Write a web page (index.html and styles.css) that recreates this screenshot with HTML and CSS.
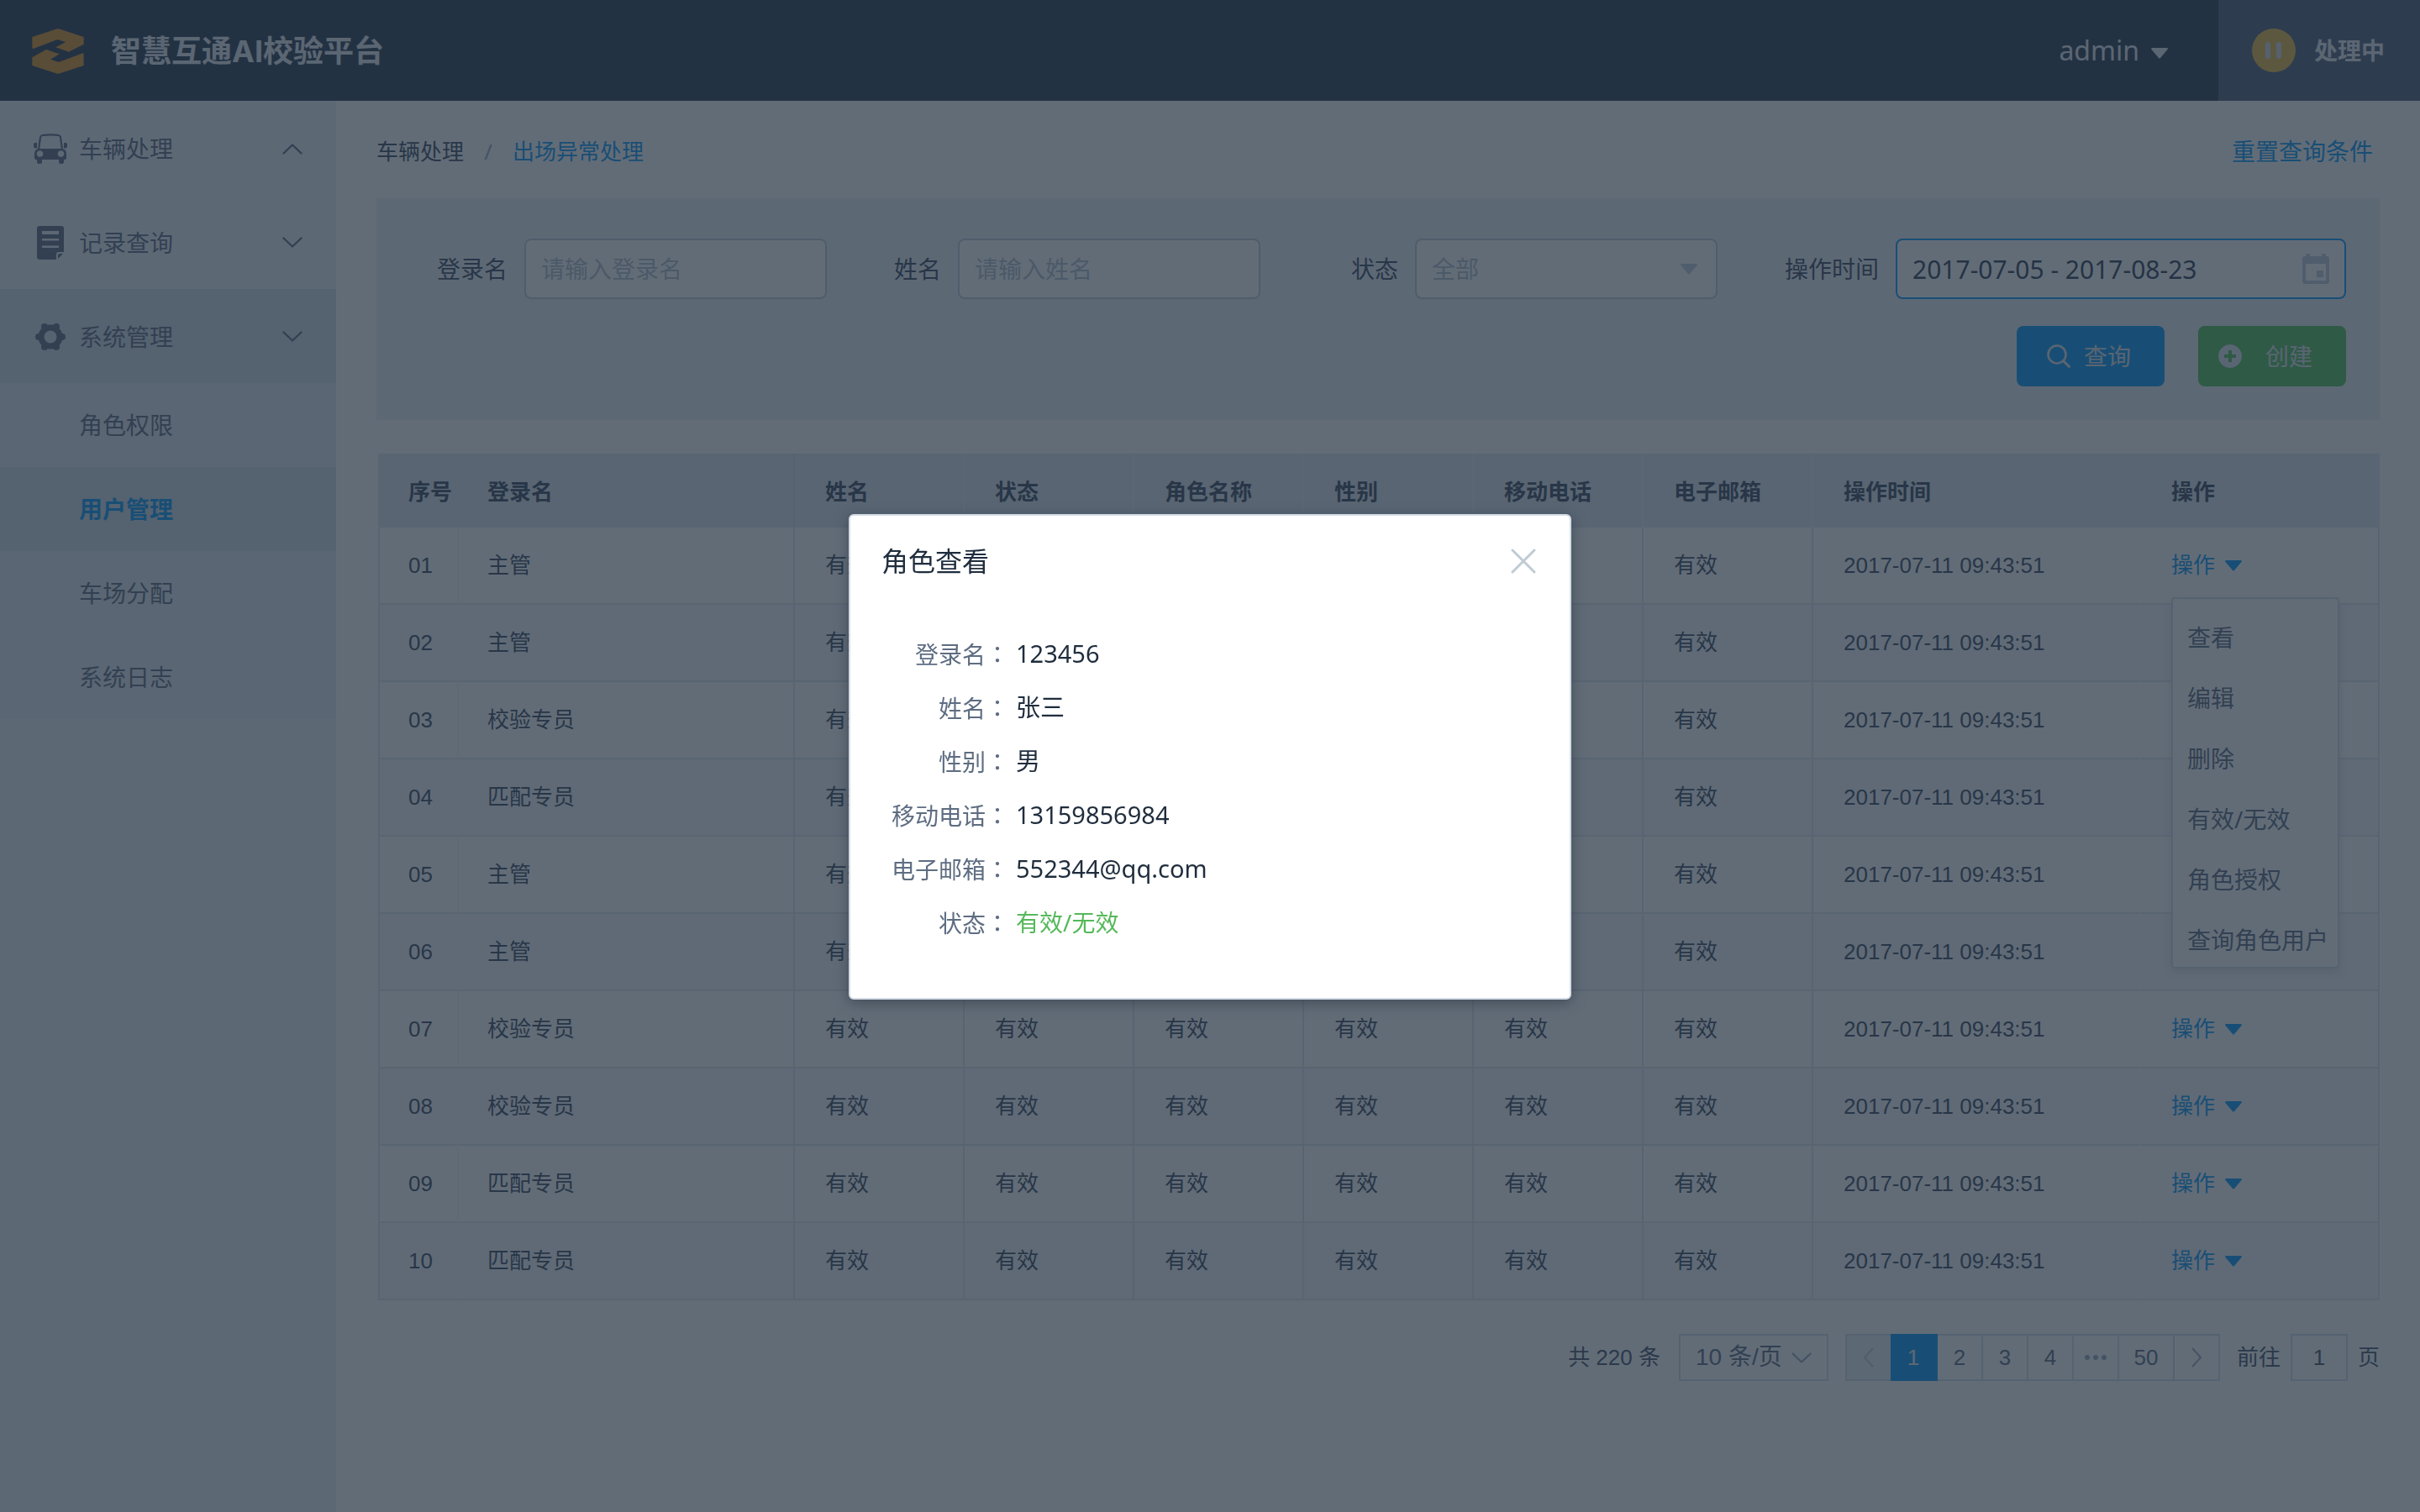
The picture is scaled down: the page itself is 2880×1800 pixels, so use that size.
FILE: index.html
```html
<!DOCTYPE html>
<html lang="zh-CN">
<head>
<meta charset="utf-8">
<meta name="viewport" content="width=device-width, initial-scale=1">
<title>智慧互通AI校验平台</title>
<link rel="stylesheet" href="styles.css">
</head>
<body>
<svg class="sprite" aria-hidden="true">
  <symbol id="caret" viewBox="0 0 20 13"><path d="M1 0h18q1.500 .6 .5 2L11 12q-1 1-2 0L.5 2Q-.5.6 1 0z" fill="currentColor"/></symbol>
  <symbol id="chevron" viewBox="0 0 24 14"><path d="M1.500 1.500 12 11.500 22.500 1.500" fill="none" stroke="currentColor" stroke-width="2.400" stroke-linecap="round" stroke-linejoin="round"/></symbol>
</svg>

<header class="topbar">
  <a class="brand" href="#">
    <svg class="brand-logo" viewBox="115 102 184 162" aria-hidden="true">
      <path d="M115 132 207 102l92 30v26l-54 27-46-16 36-19-30-9-86 33q-4 0-4-5zM299 234l-92 30-92-30v-29l50-28 47 16-32 19 30 10 86-32q3 1 3 5z" fill="#e2972a"/>
    </svg>
    <span class="brand-name">智慧互通AI校验平台</span>
  </a>
  <button class="account" type="button">admin<svg class="caret"><use href="#caret"/></svg></button>
  <button class="status" type="button">
    <svg class="status-icon" viewBox="0 0 52 52" aria-hidden="true"><circle cx="26" cy="26" r="26" fill="#e9bb49"/><path d="M19 19v14M32 19v14" stroke="#d5dae3" stroke-width="6" stroke-linecap="round"/></svg>
    处理中
  </button>
</header>

<div class="layout">
  <nav class="sidebar">
    <a class="nav-item" href="#">
      <svg class="nav-icon" viewBox="0 0 40 36" aria-hidden="true"><path d="M6 19 8 4.500q.4-2 2.500-2.500 9.500-1.400 19 0 2.100.5 2.500 2.500L34 19" fill="none" stroke="currentColor" stroke-width="2.200"/><path fill="currentColor" d="M0 12.500Q0 11 1.500 11H4v6.500H2.500Q0 17.500 0 15zM40 12.500Q40 11 38.500 11H36v6.500h1.500q2.500 0 2.500-2.500zM4 30h6v4q0 2-2 2H6q-2 0-2-2zM30 30h6v4q0 2-2 2h-2q-2 0-2-2z"/><path fill="currentColor" fill-rule="evenodd" d="M6 18h28q5 1 5 6v5q0 2-2 2H3q-2 0-2-2v-5q0-5 5-6zm1.500 2.200a3.800 3.800 0 1 0 .01 0zm25 0a3.800 3.800 0 1 0 .01 0z"/></svg>
      <span>车辆处理</span><svg class="nav-chevron up"><use href="#chevron"/></svg>
    </a>
    <a class="nav-item" href="#">
      <svg class="nav-icon" viewBox="0 0 40 40" aria-hidden="true"><path fill="currentColor" fill-rule="evenodd" d="M7 0h26q3 0 3 3v28h-6q-3 0-3 3v6H7q-3 0-3-3V3q0-3 3-3zm3 6v4h20V6zm0 9v2.500h20V15zm0 8.500v2.500h20v-2.500z"/><path fill="currentColor" d="m29 39 6-6h-4q-2 0-2 2z"/></svg>
      <span>记录查询</span><svg class="nav-chevron"><use href="#chevron"/></svg>
    </a>
    <a class="nav-item open" href="#">
      <svg class="nav-icon" viewBox="0 0 40 40" aria-hidden="true"><circle cx="20" cy="20" r="11" fill="none" stroke="currentColor" stroke-width="7"/><g fill="currentColor"><circle cx="34" cy="20" r="4"/><circle cx="27" cy="8" r="4"/><circle cx="13" cy="8" r="4"/><circle cx="6" cy="20" r="4"/><circle cx="13" cy="32" r="4"/><circle cx="27" cy="32" r="4"/></g></svg>
      <span>系统管理</span><svg class="nav-chevron"><use href="#chevron"/></svg>
    </a>
    <div class="subnav">
      <a class="subnav-item" href="#">角色权限</a>
      <a class="subnav-item active" href="#">用户管理</a>
      <a class="subnav-item" href="#">车场分配</a>
      <a class="subnav-item" href="#">系统日志</a>
    </div>
  </nav>

  <main class="content">
    <div class="page-head">
      <div class="breadcrumb"><a class="crumb" href="#">车辆处理</a><span class="crumb-sep">/</span><a class="crumb current" href="#">出场异常处理</a></div>
      <a class="reset" href="#">重置查询条件</a>
    </div>

    <form class="filters">
      <div class="fields">
        <div class="field"><label for="login">登录名</label><input class="control" id="login" type="text" placeholder="请输入登录名"></div>
        <div class="field"><label for="name">姓名</label><input class="control" id="name" type="text" placeholder="请输入姓名"></div>
        <div class="field"><label for="state">状态</label>
          <div class="control-wrap"><select class="control" id="state"><option>全部</option></select><svg class="caret control-icon"><use href="#caret"/></svg></div>
        </div>
        <div class="field"><label for="range">操作时间</label>
          <div class="control-wrap"><input class="control range" id="range" type="text" value="2017-07-05 - 2017-08-23">
            <svg class="calendar control-icon" viewBox="0 0 32 36" aria-hidden="true"><path fill="currentColor" fill-rule="evenodd" d="M4 0h5v3h14V0h5v3h1q3 0 3 3v27q0 3-3 3H3q-3 0-3-3V6q0-3 3-3h1zM4 12v20h24V12zm13 8h8v8h-8z"/></svg></div>
        </div>
      </div>
      <div class="actions">
        <button class="btn btn-search" type="button"><svg class="btn-icon" viewBox="0 0 28 28" aria-hidden="true"><circle cx="12" cy="12" r="10.500" fill="none" stroke="currentColor" stroke-width="2.600"/><path d="m20 20 6.500 6.500" stroke="currentColor" stroke-width="3" stroke-linecap="round"/></svg>查询</button>
        <button class="btn btn-create" type="button"><svg class="btn-icon" viewBox="0 0 28 28" aria-hidden="true"><path fill="currentColor" fill-rule="evenodd" d="M14 0a14 14 0 1 0 .01 0zM12 7h4v5h5v4h-5v5h-4v-5H7v-4h5z"/></svg>创建</button>
      </div>
    </form>

    <table class="users">
      <colgroup><col class="col-no"><col class="col-login"><col class="col-std"><col class="col-std"><col class="col-std"><col class="col-std"><col class="col-std"><col class="col-std"><col class="col-time"><col></colgroup>
      <thead><tr><th>序号</th><th>登录名</th><th>姓名</th><th>状态</th><th>角色名称</th><th>性别</th><th>移动电话</th><th>电子邮箱</th><th>操作时间</th><th>操作</th></tr></thead>
      <tbody>
        <tr><td>01</td><td>主管</td><td>有效</td><td></td><td></td><td></td><td></td><td>有效</td><td>2017-07-11 09:43:51</td><td>
          <div class="dropdown"><button class="op" type="button">操作<svg class="caret"><use href="#caret"/></svg></button>
            <div class="menu"><a href="#">查看</a><a href="#">编辑</a><a href="#">删除</a><a href="#">有效/无效</a><a href="#">角色授权</a><a href="#">查询角色用户</a></div>
          </div></td></tr>
        <tr><td>02</td><td>主管</td><td>有效</td><td></td><td></td><td></td><td></td><td>有效</td><td>2017-07-11 09:43:51</td><td></td></tr>
        <tr><td>03</td><td>校验专员</td><td>有效</td><td></td><td></td><td></td><td></td><td>有效</td><td>2017-07-11 09:43:51</td><td></td></tr>
        <tr><td>04</td><td>匹配专员</td><td>有效</td><td></td><td></td><td></td><td></td><td>有效</td><td>2017-07-11 09:43:51</td><td></td></tr>
        <tr><td>05</td><td>主管</td><td>有效</td><td></td><td></td><td></td><td></td><td>有效</td><td>2017-07-11 09:43:51</td><td></td></tr>
        <tr><td>06</td><td>主管</td><td>有效</td><td></td><td></td><td></td><td></td><td>有效</td><td>2017-07-11 09:43:51</td><td></td></tr>
        <tr><td>07</td><td>校验专员</td><td>有效</td><td>有效</td><td>有效</td><td>有效</td><td>有效</td><td>有效</td><td>2017-07-11 09:43:51</td><td><button class="op" type="button">操作<svg class="caret"><use href="#caret"/></svg></button></td></tr>
        <tr><td>08</td><td>校验专员</td><td>有效</td><td>有效</td><td>有效</td><td>有效</td><td>有效</td><td>有效</td><td>2017-07-11 09:43:51</td><td><button class="op" type="button">操作<svg class="caret"><use href="#caret"/></svg></button></td></tr>
        <tr><td>09</td><td>匹配专员</td><td>有效</td><td>有效</td><td>有效</td><td>有效</td><td>有效</td><td>有效</td><td>2017-07-11 09:43:51</td><td><button class="op" type="button">操作<svg class="caret"><use href="#caret"/></svg></button></td></tr>
        <tr><td>10</td><td>匹配专员</td><td>有效</td><td>有效</td><td>有效</td><td>有效</td><td>有效</td><td>有效</td><td>2017-07-11 09:43:51</td><td><button class="op" type="button">操作<svg class="caret"><use href="#caret"/></svg></button></td></tr>
      </tbody>
    </table>

    <div class="pagination">
      <span class="total">共 220 条</span>
      <div class="control-wrap"><select class="page-size" aria-label="每页条数"><option>10 条/页</option></select><svg class="size-chevron"><use href="#chevron"/></svg></div>
      <div class="pager">
        <button class="page prev" type="button" aria-label="上一页" disabled><svg viewBox="0 0 14 24"><path d="M12 1 2 12l10 11" fill="none" stroke="currentColor" stroke-width="2"/></svg></button>
        <button class="page active" type="button">1</button>
        <button class="page" type="button">2</button>
        <button class="page" type="button">3</button>
        <button class="page" type="button">4</button>
        <button class="page more" type="button" aria-label="更多"><svg viewBox="0 0 26 6"><circle cx="3" cy="3" r="3"/><circle cx="13" cy="3" r="3"/><circle cx="23" cy="3" r="3"/></svg></button>
        <button class="page last" type="button">50</button>
        <button class="page" type="button" aria-label="下一页"><svg viewBox="0 0 14 24"><path d="m2 1 10 11L2 23" fill="none" stroke="currentColor" stroke-width="2"/></svg></button>
      </div>
      <label class="jump">前往<input type="text" value="1">页</label>
    </div>
  </main>
</div>

<div class="mask">
  <section class="dialog" role="dialog" aria-modal="true" aria-labelledby="dialog-title">
    <header class="dialog-head">
      <h2 id="dialog-title">角色查看</h2>
      <button class="close" type="button" aria-label="关闭"><svg viewBox="0 0 30 30"><path d="m2 2 26 26M28 2 2 28" stroke="currentColor" stroke-width="3" stroke-linecap="round"/></svg></button>
    </header>
    <dl class="details">
      <dt>登录名<span class="colon" lang="zh-TW">：</span></dt><dd>123456</dd>
      <dt>姓名<span class="colon" lang="zh-TW">：</span></dt><dd>张三</dd>
      <dt>性别<span class="colon" lang="zh-TW">：</span></dt><dd>男</dd>
      <dt>移动电话<span class="colon" lang="zh-TW">：</span></dt><dd>13159856984</dd>
      <dt>电子邮箱<span class="colon" lang="zh-TW">：</span></dt><dd>552344@qq.com</dd>
      <dt>状态<span class="colon" lang="zh-TW">：</span></dt><dd class="valid">有效/无效</dd>
    </dl>
  </section>
</div>
</body>
</html>
```
FILE: styles.css
```css
:root {
  --ui: "Noto Sans", "Noto Sans CJK SC", sans-serif;
  --data: "Liberation Sans", "Noto Sans CJK SC", sans-serif;
  --blue: #089bf8;
  --green: #54c35a;
  --ink: #3d4c61;
  --muted: #5e6d82;
  --line: #dfe5ee;
  --control-line: #c0ccda;
  --placeholder: #b2becd;
}

* { box-sizing: border-box; }

body {
  margin: 0;
  min-height: 100vh;
  display: flex;
  flex-direction: column;
  background: #fff;
  color: var(--ink);
  font: 28px/40px var(--ui);
}

a { color: inherit; text-decoration: none; }

button, input, select { font: inherit; color: inherit; }

button {
  padding: 0;
  border: 0;
  background: none;
}

.sprite { display: none; }
.caret { width: 20px; height: 13px; flex: none; }

/* Top bar */
.topbar {
  display: flex;
  align-items: stretch;
  height: 120px;
  background: #2d3d53;
  color: #e6eaf0;
}

.brand {
  display: flex;
  align-items: center;
  gap: 32px;
  margin-right: auto;
  padding: 2px 0 0 38px;
}

.brand-logo { width: 62px; height: 54px; }

.brand-name {
  font-family: Inter, "Noto Sans CJK SC", sans-serif;
  font-size: 36px;
  font-weight: 700;
}

.account {
  display: flex;
  align-items: center;
  gap: 14px;
  padding: 0 60px;
  font-size: 32px;
}

.account .caret { margin-top: 6px; }

.status {
  display: flex;
  align-items: center;
  gap: 22px;
  width: 240px;
  padding-left: 40px;
  background: #535f78;
  font-weight: 700;
}

.status-icon { width: 52px; height: 52px; }

/* Side navigation */
.layout { display: flex; flex: 1; }

.sidebar {
  flex: none;
  width: 400px;
  background: #eff2f7;
  color: var(--muted);
}

.nav-item {
  display: flex;
  align-items: center;
  gap: 14px;
  height: 112px;
  padding: 2px 40px 0;
}

.nav-item.open { background: #d3dce6; }
.nav-icon { width: 40px; height: 40px; }
.nav-chevron { width: 24px; height: 14px; margin-left: auto; }
.nav-chevron.up { transform: rotate(180deg); }

.subnav { background: #e5e9f2; }

.subnav-item {
  display: block;
  padding-left: 94px;
  line-height: 100px;
}

.subnav-item.active {
  background: #d3dce6;
  color: var(--blue);
  font-weight: 700;
}

/* Main column */
.content {
  flex: 1;
  min-width: 0;
  padding: 0 48px;
}

.page-head {
  display: flex;
  align-items: center;
  justify-content: space-between;
  height: 116px;
  padding: 4px 8px 0 0;
}

.breadcrumb { display: flex; font-size: 26px; }
.crumb-sep { width: 58px; text-align: center; color: #99a9bf; }
.crumb.current, .reset { color: var(--blue); }

/* Filters */
.filters {
  padding: 48px 40px 40px 0;
  background: #eff2f7;
}

.fields {
  display: grid;
  grid-template-columns: 536fr 516fr 544fr 748fr;
}

.field {
  display: flex;
  align-items: center;
  justify-content: flex-end;
  gap: 20px;
}

.control-wrap { position: relative; display: flex; }

.control {
  width: 360px;
  height: 72px;
  padding: 0 18px;
  border: 2px solid var(--control-line);
  border-radius: 8px;
  background: #fff;
  appearance: none;
}

.control::placeholder { color: var(--placeholder); opacity: 1; }
select.control { color: var(--placeholder); }

.control.range {
  width: 536px;
  border-color: var(--blue);
  color: #324157;
  font-size: 30px;
}

.control-icon {
  position: absolute;
  top: 0;
  bottom: 0;
  right: 24px;
  margin: auto 0;
  color: var(--control-line);
  pointer-events: none;
}

.calendar { right: 20px; width: 32px; height: 36px; }

.actions {
  display: flex;
  justify-content: flex-end;
  gap: 40px;
  margin-top: 32px;
}

.btn {
  display: flex;
  align-items: center;
  width: 176px;
  height: 72px;
  border-radius: 8px;
  color: #e0e6ed;
}

.btn-icon { width: 28px; height: 28px; }
.btn-search { gap: 16px; padding-left: 36px; background: var(--blue); }
.btn-create { gap: 28px; padding-left: 24px; background: var(--green); }

/* Users table */
.users {
  width: calc(100% - 2px);
  margin: 40px 0 0 2px;
  table-layout: fixed;
  border-collapse: separate;
  border-spacing: 0;
  font: 26px/36px var(--data);
}

.col-no { width: 96px; }
.col-login { width: 400px; }
.col-std { width: 202px; }
.col-time { width: 390px; }

.users th, .users td {
  padding: 0 0 0 34px;
  border-right: 2px solid var(--line);
  text-align: left;
  white-space: nowrap;
}

.users th {
  height: 88px;
  padding-top: 4px;
  background: #e0e6ef;
  border-right-color: #eaeef4;
  font-weight: 700;
}

.users td { height: 92px; border-bottom: 2px solid var(--line); }
.users tbody tr:nth-child(even) { background: #f5f7fb; }
.users td:first-child { border-left: 2px solid var(--line); border-right-color: #f7f9fc; }
.users th:first-child { padding-left: 36px; }
.users th:first-child, .users th:nth-child(9), .users td:nth-child(9) { border-right-color: transparent; }
.users th:nth-child(n+3), .users td:nth-child(n+3) { padding-left: 36px; }
.users th:nth-child(2) { border-right-color: #d3dce6; }
.users th:last-child { border-right-color: #e0e6ef; }

.dropdown { position: relative; display: inline-block; }

.op {
  display: flex;
  align-items: center;
  gap: 12px;
  color: var(--blue);
}

.menu {
  position: absolute;
  z-index: 1;
  top: calc(100% + 20px);
  left: 0;
  display: grid;
  gap: 32px;
  width: 200px;
  padding: 26px 0 12px 17px;
  border: 2px solid #d3dce6;
  border-radius: 4px;
  background: #fff;
  box-shadow: 0 4px 12px rgba(31, 45, 61, .12);
  color: var(--muted);
  font: 28px/40px var(--ui);
}

/* Pagination */
.pagination {
  display: flex;
  align-items: center;
  justify-content: flex-end;
  margin: 40px 0;
  color: #475669;
  font: 26px/36px var(--data);
}

.page-size {
  width: 178px;
  height: 56px;
  margin: 0 20px 0 22px;
  padding: 0 18px;
  border: 2px solid #d3dce6;
  background: #fff;
  color: var(--muted);
  font-size: 28px;
  appearance: none;
}

.size-chevron {
  position: absolute;
  top: 22px;
  right: 40px;
  width: 24px;
  height: 14px;
  color: #99a9bf;
  pointer-events: none;
}

.pager { display: flex; margin-right: 20px; }

.page {
  display: flex;
  align-items: center;
  justify-content: center;
  width: 54px;
  height: 56px;
  border: 2px solid #d3dce6;
  border-left-width: 0;
  color: var(--muted);
}

.page svg { height: 24px; color: #99a9bf; }
.page.prev { border-left-width: 2px; border-right-width: 0; background: #eff2f7; }
.page.prev svg { color: #c0ccda; }
.page.active { width: 56px; border-color: var(--blue); background: var(--blue); color: #eff2f7; }
.page.more svg { width: 26px; height: 6px; fill: #99a9bf; }
.page.last { width: 66px; }

.jump { display: flex; align-items: center; }

.jump input {
  width: 68px;
  height: 56px;
  margin: 0 12px;
  padding: 0;
  border: 2px solid #d3dce6;
  background: #fff;
  text-align: center;
}

/* Detail dialog */
.mask {
  position: fixed;
  z-index: 10;
  inset: 0;
  display: flex;
  align-items: center;
  justify-content: center;
  padding-top: 2px;
  background: rgba(31, 45, 61, .7);
}

.dialog {
  width: 860px;
  padding: 32px 40px 58px 37px;
  border: 2px solid #d3dce6;
  border-radius: 6px;
  background: #fff;
  box-shadow: 0 4px 16px rgba(31, 45, 61, .5);
}

.dialog-head {
  display: flex;
  align-items: center;
  justify-content: space-between;
  height: 44px;
}

.dialog-head h2 {
  margin: 0;
  color: #1f2d3d;
  font-size: 32px;
  font-weight: 400;
}

.close { display: flex; color: #bfcbd3; }
.close svg { width: 30px; height: 30px; }

.details {
  display: grid;
  grid-template-columns: 152px 1fr;
  grid-auto-rows: 64px;
  align-items: center;
  gap: 0 8px;
  margin: 56px 0 0;
}

.details dt { color: var(--muted); text-align: right; white-space: nowrap; }
.details dd { margin: 0; color: #1f2d3d; font-size: 29px; }
.details .valid { color: #55b95a; font-size: 28px; }
.colon { font-family: "Noto Sans CJK TC", sans-serif; }
```
